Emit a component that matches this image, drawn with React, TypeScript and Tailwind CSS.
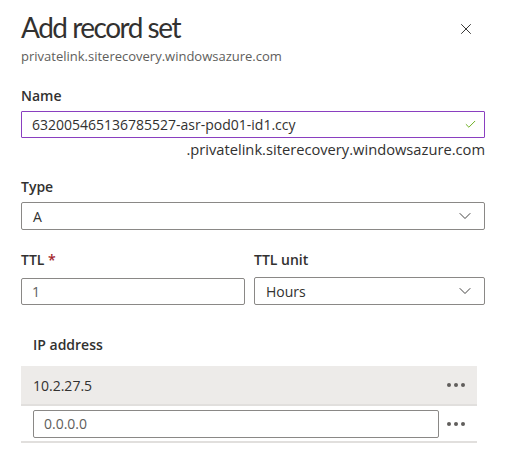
import { Check, ChevronDown, X } from 'lucide-react';

function Dots() {
  return (
    <div className="flex items-center gap-[3px] w-[18px]">
      <span className="w-[4px] h-[4px] rounded-full bg-[#605e5c]" />
      <span className="w-[4px] h-[4px] rounded-full bg-[#605e5c]" />
      <span className="w-[4px] h-[4px] rounded-full bg-[#605e5c]" />
    </div>
  );
}

function Select({ value, className = '' }: { value: string; className?: string }) {
  return (
    <div
      className={`h-[28px] flex items-center justify-between border border-[#8a8886] rounded-[2px] pl-[11px] pr-[9px] ${className}`}
    >
      <span className="text-[14px] text-[#323130]">{value}</span>
      <ChevronDown className="w-[20px] h-[20px] text-[#323130]" strokeWidth={1.1} />
    </div>
  );
}

export default function App() {
  return (
    <div
      className="w-[505px] h-[467px] bg-white text-[#323130] pl-[21px] pr-[20px] pt-[8px]"
      style={{ fontFamily: '"Open Sans", "Noto Sans", sans-serif' }}
    >
      {/* Header */}
      <div className="flex items-start justify-between">
        <div>
          <h1
            className="text-[28px] leading-[38px] font-normal tracking-[-1.5px]"
            style={{ fontFamily: 'Lato, "Open Sans", sans-serif' }}
          >
            Add record set
          </h1>
          <div className="text-[13px] leading-[18px] text-[#605e5c] mt-[1px]">
            privatelink.siterecovery.windowsazure.com
          </div>
        </div>
        <X className="w-[18px] h-[18px] mt-[12px] mr-[10px] text-[#323130]" strokeWidth={1.3} />
      </div>

      {/* Name */}
      <div className="mt-[21px]">
        <div className="text-[14px] leading-[20px] font-semibold">Name</div>
        <div className="mt-[5px] h-[27px] flex items-center justify-between border border-[#8a3fc0] rounded-[1px] pl-[10px] pr-[7px]">
          <span className="text-[14px]">632005465136785527-asr-pod01-id1.ccy</span>
          <Check className="w-[13px] h-[13px] text-[#57a300]" strokeWidth={1.6} />
        </div>
        <div className="text-right text-[14.7px] leading-[22px]">
          .privatelink.siterecovery.windowsazure.com
        </div>
      </div>

      {/* Type */}
      <div className="mt-[17px]">
        <div className="text-[14px] leading-[20px] font-semibold">Type</div>
        <Select value="A" className="mt-[5px]" />
      </div>

      {/* TTL */}
      <div className="mt-[20px] grid grid-cols-[224px_1fr] gap-[9px]">
        <div>
          <div className="text-[14px] leading-[20px] font-semibold">
            TTL <span className="text-[#a4262c]">*</span>
          </div>
          <div className="mt-[8px] h-[27px] flex items-center border border-[#8a8886] rounded-[2px] pl-[10px]">
            <span className="text-[14px] text-[#605e5c]">1</span>
          </div>
        </div>
        <div>
          <div className="text-[14px] leading-[20px] font-semibold">TTL unit</div>
          <Select value="Hours" className="mt-[7px]" />
        </div>
      </div>

      {/* IP address */}
      <div className="mt-[30px] w-[456px]">
        <div className="pl-[12px] text-[14px] leading-[20px] font-semibold">IP address</div>
        <div className="mt-[11px] h-[40px] flex items-center justify-between bg-[#edebe9] border-b-2 border-[#e1dfdd] pl-[12px] pr-[12px]">
          <span className="text-[14px]">10.2.27.5</span>
          <Dots />
        </div>
        <div className="h-[37px] flex items-center justify-between border-b-2 border-[#e1dfdd] pl-[12px] pr-[12px]">
          <div className="w-[406px] h-[28px] flex items-center border border-[#8a8886] rounded-[2px] pl-[10px]">
            <span className="text-[14px] text-[#605e5c]">0.0.0.0</span>
          </div>
          <Dots />
        </div>
      </div>
    </div>
  );
}
